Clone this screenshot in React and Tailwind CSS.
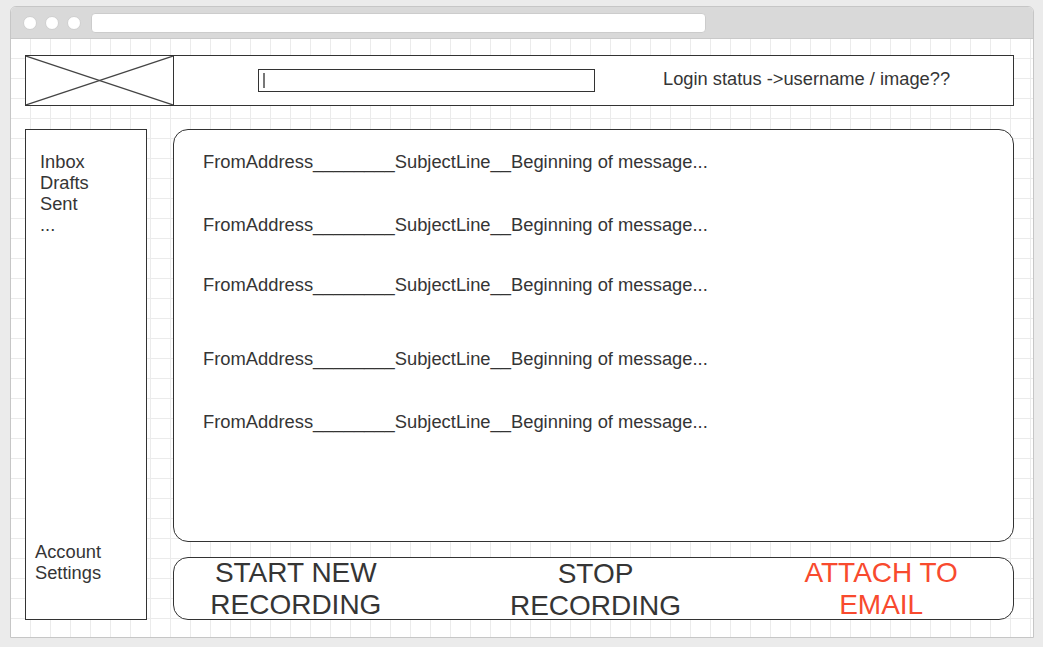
import React from 'react';

// Wireframe of a simple voice-mail client, drawn inside a mock browser window
const rows = [
  { id: 1, space: 'mt-[21px]' },
  { id: 2, space: 'mt-[42px]' },
  { id: 3, space: 'mt-[39px]' },
  { id: 4, space: 'mt-[53px]' },
  { id: 5, space: 'mt-[42px]' },
];

const App = () => {
  return (
    <div className="w-[1043px] h-[647px] bg-[#ebebeb] pt-[6px] pl-[10px] font-['Liberation_Sans',Arial,sans-serif] text-[#353535]">
      <div className="w-[1024px] h-[632px] border border-[#c6c6c6] rounded-t-[6px] bg-white flex flex-col overflow-hidden">
        {/* title bar */}
        <div className="h-[32px] bg-[#d9d9d9] border-b border-[#c9c9c9] flex items-center pl-[12px] gap-[8px] shrink-0">
          <div className="w-[14px] h-[14px] rounded-full bg-white border border-[#cfcfcf]" />
          <div className="w-[14px] h-[14px] rounded-full bg-white border border-[#cfcfcf]" />
          <div className="w-[14px] h-[14px] rounded-full bg-white border border-[#cfcfcf]" />
          <div className="ml-[2px] w-[615px] h-[20px] bg-white rounded-[4px] border border-[#cccccc]" />
        </div>

        {/* canvas */}
        <div className="flex-1 pt-[16px] pl-[14px] pr-[19px] bg-white bg-[linear-gradient(to_right,#ebebeb_1px,transparent_1px),linear-gradient(to_bottom,#ebebeb_1px,transparent_1px)] bg-[size:20px_20px] bg-[position:19px_19px]">
          {/* header */}
          <div className="h-[51px] border border-[#333] bg-white flex items-center">
            <div className="w-[148px] h-full border-r border-[#333] shrink-0">
              <svg width="147" height="49" viewBox="0 0 147 49" className="block">
                <line x1="0" y1="0" x2="147" y2="49" stroke="#444" strokeWidth="1.2" />
                <line x1="0" y1="49" x2="147" y2="0" stroke="#444" strokeWidth="1.2" />
              </svg>
            </div>
            <div className="ml-[84px] w-[337px] h-[23px] border border-[#333] flex items-center pl-[4px]">
              <div className="w-[2px] h-[15px] bg-[#777]" />
            </div>
            <div className="ml-[68px] text-[18.3px] leading-[20px] -mt-[4px]">Login status -&gt;username / image??</div>
          </div>

          <div className="mt-[23px] flex gap-[26px]">
            {/* sidebar */}
            <div className="w-[122px] h-[491px] border border-[#333] bg-white flex flex-col justify-between pb-[36px]">
              <div className="pl-[14px] pt-[21px] text-[18.3px] leading-[21px]">
                <div>Inbox</div>
                <div>Drafts</div>
                <div>Sent</div>
                <div>...</div>
              </div>
              <div className="pl-[9px] text-[18.3px] leading-[21px]">
                <div>Account</div>
                <div>Settings</div>
              </div>
            </div>

            <div className="flex-1 flex flex-col">
              {/* message list */}
              <div className="h-[413px] border border-[#333] rounded-[15px] bg-white pl-[29px]">
                {rows.map((r) => (
                  <div key={r.id} className={`${r.space} text-[18.35px] leading-[21px]`}>
                    FromAddress________SubjectLine__Beginning of message...
                  </div>
                ))}
              </div>

              {/* recording actions */}
              <div className="mt-[15px] h-[63px] border border-[#333] rounded-[15px] bg-white grid grid-cols-3 items-center text-center text-[28px] leading-[32px]">
                <div className="-ml-[36px] -mt-[2px]">START NEW<br />RECORDING</div>
                <div className="ml-[4px]">STOP<br />RECORDING</div>
                <div className="text-[#f84a2e] ml-[16px] -mt-[2px]">ATTACH TO<br />EMAIL</div>
              </div>
            </div>
          </div>
        </div>
      </div>
    </div>
  );
};

export default App;
